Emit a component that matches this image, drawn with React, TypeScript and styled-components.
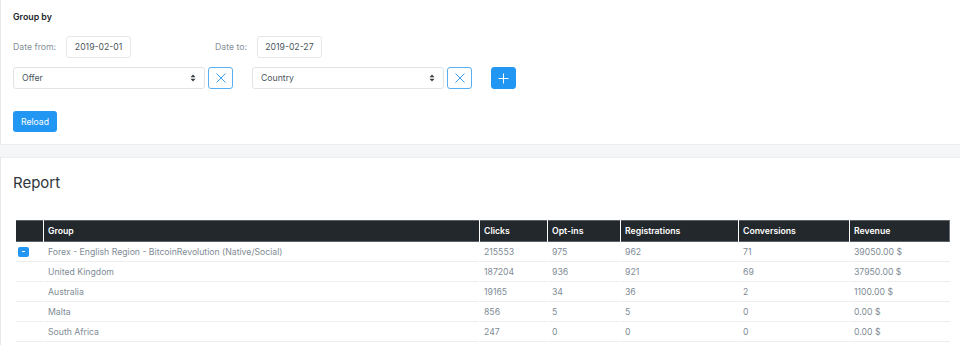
import React from "react";
import styled, { createGlobalStyle } from "styled-components";

const Global = createGlobalStyle`
  html, body { margin: 0; padding: 0; background: #f5f6f8; overflow: hidden; }
  body { font-family: Inter, "Liberation Sans", Arial, sans-serif; color: #23282c; }
  * { box-sizing: border-box; }
`;

const Page = styled.div`
  display: flex;
  flex-direction: column;
  gap: 12px;
  width: 960px;
  min-height: 100vh;
`;

const Card = styled.section<{ $pt: number; $pb: number }>`
  background: #fff;
  border-left: 1px solid #e6e8ea;
  border-bottom: 1px solid #eceef0;
  border-top: 1px solid #eceef0;
  padding: ${(p) => p.$pt}px 0 ${(p) => p.$pb}px 12px;
  display: flex;
  flex-direction: column;
`;

const TopCard = styled(Card)`
  border-top: none;
`;

const ReportCard = styled(Card)`
  flex: 1;
  border-bottom: none;
`;

const Title = styled.div`
  font-size: 8.8px;
  font-weight: 600;
  line-height: 14px;
  color: #23282c;
  margin-bottom: 12px;
`;

const DateRow = styled.div`
  display: grid;
  grid-template-columns: 202px 200px;
  height: 22px;
  margin-bottom: 9px;
`;

const DateField = styled.label`
  display: flex;
  align-items: center;
  gap: 10px;
  font-size: 8.7px;
  color: #858f99;
`;

const DateInput = styled.div`
  height: 22px;
  width: 65px;
  border: 1px solid #e4e7ea;
  border-radius: 3px;
  display: flex;
  align-items: center;
  justify-content: center;
  font-size: 8.7px;
  color: #4b5660;
  background: #fff;
`;

const GroupRow = styled.div`
  display: flex;
  align-items: center;
  gap: 19px;
  height: 22px;
  margin-bottom: 22px;
`;

const SelectGroup = styled.div`
  display: flex;
  gap: 3px;
`;

const Select = styled.div`
  width: 192px;
  height: 22px;
  border: 1px solid #e1e4e7;
  border-radius: 3px;
  background: #fff;
  display: flex;
  align-items: center;
  justify-content: space-between;
  padding: 0 8px 0 8px;
  font-size: 8.7px;
  color: #4b5660;
`;

const IconButton = styled.button<{ $filled?: boolean }>`
  width: 25px;
  height: 22px;
  border-radius: 3px;
  border: 1px solid ${(p) => (p.$filled ? "#2196f3" : "#5aaef2")};
  background: ${(p) => (p.$filled ? "#2196f3" : "#fff")};
  display: flex;
  align-items: center;
  justify-content: center;
  padding: 0;
`;

const ReloadButton = styled.button`
  width: 44px;
  height: 21px;
  border: none;
  border-radius: 3px;
  background: #2196f3;
  color: #fff;
  font-family: inherit;
  font-size: 8.7px;
  padding: 0;
  align-self: flex-start;
`;

const Heading = styled.h4`
  margin: 0 0 28px 0;
  font-size: 15px;
  font-weight: 400;
  line-height: 19px;
  color: #2f353a;
`;

const Table = styled.table`
  margin-left: 2px;
  width: 934px;
  border-collapse: separate;
  border-spacing: 1px 0;
  font-size: 8.7px;
  table-layout: fixed;
`;

const Th = styled.th<{ $w: number }>`
  width: ${(p) => p.$w}px;
  background: #23282c;
  color: #fff;
  font-weight: 600;
  text-align: left;
  height: 22px;
  padding: 0 4px;
  border-top: 1px solid #5b6168;
  border-bottom: 1px solid #5b6168;
  &:last-child { border-right: 1px solid #6b7178; }
`;

const Td = styled.td`
  height: 20px;
  padding: 0 4px;
  color: #808b95;
  border-bottom: 1px solid #eceef0;
  white-space: nowrap;
`;

const Toggle = styled.span`
  display: inline-flex;
  width: 11px;
  height: 10px;
  border-radius: 2px;
  background: #2196f3;
  align-items: center;
  justify-content: center;
  vertical-align: middle;
  margin-left: -2px;
  &::after {
    content: "";
    width: 3px;
    height: 1px;
    background: #fff;
  }
`;

const Chevrons = () => (
  <svg width="6" height="8" viewBox="0 0 6 8">
    <path d="M3 0.5 L5.5 3.3 H0.5 Z" fill="#343a40" />
    <path d="M3 7.5 L5.5 4.7 H0.5 Z" fill="#343a40" />
  </svg>
);

const XIcon = () => (
  <svg width="10" height="10" viewBox="0 0 10 10">
    <path d="M0.5 0.5 L9.5 9.5 M9.5 0.5 L0.5 9.5" stroke="#3fa0f0" strokeWidth="1" fill="none" />
  </svg>
);

const PlusIcon = () => (
  <svg width="11" height="11" viewBox="0 0 11 11">
    <path d="M5.5 0.5 V10.5 M0.5 5.5 H10.5" stroke="#ffffff" strokeWidth="1" fill="none" />
  </svg>
);

const columns: [string, number][] = [
  ["", 27],
  ["Group", 435],
  ["Clicks", 67],
  ["Opt-ins", 72],
  ["Registrations", 117],
  ["Conversions", 110],
  ["Revenue", 100],
];

const rows = [
  ["Forex - English Region - BitcoinRevolution (Native/Social)", "215553", "975", "962", "71", "39050.00 $"],
  ["United Kingdom", "187204", "936", "921", "69", "37950.00 $"],
  ["Australia", "19165", "34", "36", "2", "1100.00 $"],
  ["Malta", "856", "5", "5", "0", "0.00 $"],
  ["South Africa", "247", "0", "0", "0", "0.00 $"],
];

export default function App() {
  return (
    <Page>
      <Global />
      <TopCard $pt={10} $pb={12}>
        <Title>Group by</Title>
        <DateRow>
          <DateField>
            Date from:
            <DateInput>2019-02-01</DateInput>
          </DateField>
          <DateField>
            Date to:
            <DateInput>2019-02-27</DateInput>
          </DateField>
        </DateRow>
        <GroupRow>
          <SelectGroup>
            <Select>
              Offer
              <Chevrons />
            </Select>
            <IconButton><XIcon /></IconButton>
          </SelectGroup>
          <SelectGroup>
            <Select>
              Country
              <Chevrons />
            </Select>
            <IconButton><XIcon /></IconButton>
          </SelectGroup>
          <IconButton $filled><PlusIcon /></IconButton>
        </GroupRow>
        <ReloadButton>Reload</ReloadButton>
      </TopCard>
      <ReportCard $pt={15} $pb={0}>
        <Heading>Report</Heading>
        <Table>
          <thead>
            <tr>
              {columns.map(([name, w], i) => (
                <Th key={i} $w={w}>{name}</Th>
              ))}
            </tr>
          </thead>
          <tbody>
            {rows.map((r, i) => (
              <tr key={i}>
                <Td>{i === 0 ? <Toggle /> : null}</Td>
                {r.map((c, j) => (
                  <Td key={j}>{c}</Td>
                ))}
              </tr>
            ))}
          </tbody>
        </Table>
      </ReportCard>
    </Page>
  );
}
